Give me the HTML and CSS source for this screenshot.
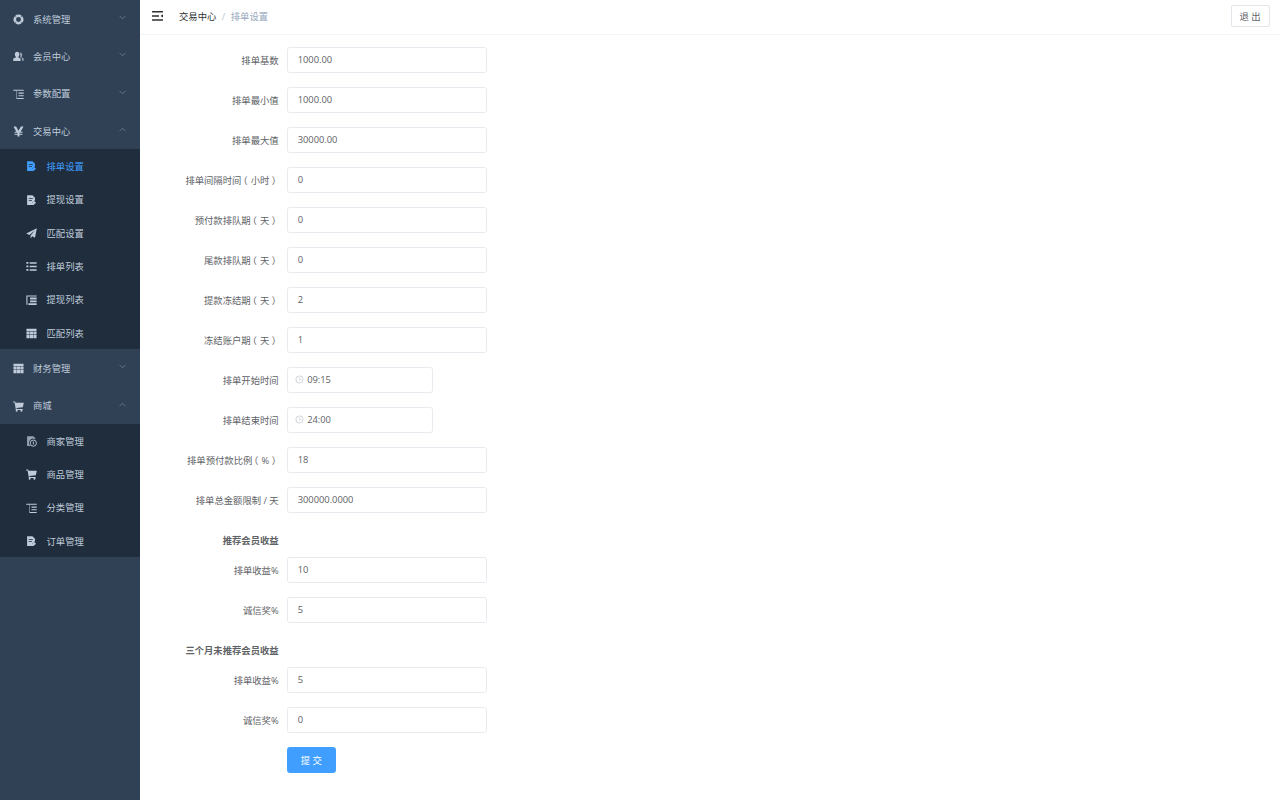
FILE: index.html
```html
<!DOCTYPE html>
<html lang="zh-CN">
<head>
<meta charset="utf-8">
<title>排单设置</title>
<link rel="stylesheet" href="styles.css">
</head>
<body>
<svg class="defs" width="0" height="0" aria-hidden="true">
  <symbol id="i-ring" viewBox="0 0 12 12"><path fill-rule="evenodd" d="M6 .5a5.500 5.500 0 1 1 0 11 5.500 5.500 0 0 1 0-11zM6 3.300a2.700 2.700 0 1 0 0 5.400 2.700 2.700 0 0 0 0-5.400z"/><path fill="#304156" d="M1 2.300l1.300-1.300 1.500 1.800-1 1zM9.700 1l1.300 1.300-1.800 1.500-1-1zM1 9.700l1.300 1.300 1.500-1.800-1-1zM11 9.700L9.700 11 8.200 9.200l1-1z" opacity=".45"/></symbol>
  <symbol id="i-users" viewBox="0 0 12 12"><path d="M4.500 .8c1.600 0 2.500 1.300 2.500 2.900 0 1.100-.4 2-1.100 2.500v.8l2.300 1.300v2.700H.3V8.300L3.100 7v-.8C2.400 5.700 2 4.800 2 3.700 2 2.100 2.900.8 4.500.8z"/><path d="M8 1.600c1.300 0 2.100 1.100 2.100 2.500 0 1-.4 1.700-.9 2.200v.6l2.500 1.300v2.300H9.700V7.800L7.500 6.600c.4-.8.6-1.800.4-2.900-.1-.8-.3-1.500-.6-2z" opacity=".7"/></symbol>
  <symbol id="i-tree" viewBox="0 0 12 12"><path d="M.3 .8h11.400v1.100H.3zM6 3.800h5.700v1.300H6zM6 6.700h5.700v1.300H6zM3.800 9.700h7.900v1.300H3.800z"/><path d="M3.300 1.900h1v8h-1z" opacity=".55"/></symbol>
  <symbol id="i-yen" viewBox="0 0 12 12"><path d="M.5 .6h2.900L6 5.300 8.600 .6h2.900L8.300 6.200h2v1.200H7.100v1h3.200v1.200H7.100v1.900H4.900V9.600H1.700V8.400h3.200v-1H1.700V6.200h2z"/></symbol>
  <symbol id="i-file" viewBox="0 0 12 12"><path d="M1.200 .3H7l2.800 2.800v2.700L7 8.200l-.6 2.800H1.200z"/><path d="M8.500 6.200l2.500 2.300-2.800 2.300-1.700.2.200-2z"/><path fill="#1f2d3d" d="M3 3.500h4.500v.9H3zM3 5.700h3.500v.9H3z"/></symbol>
  <symbol id="i-plane" viewBox="0 0 12 12"><path d="M11.800 .3L9.800 10.500 6.800 9 5 11.500V8.300l5-5.800-6.300 5L.2 6z"/></symbol>
  <symbol id="i-list" viewBox="0 0 12 12"><path d="M.4 1.200h2.200v1.900H.4zM4 1.400h7.600v1.500H4zM.4 5h2.200v1.900H.4zM4 5.200h7.600v1.500H4zM.4 8.800h2.200v1.900H.4zM4 9h7.600v1.500H4z"/></symbol>
  <symbol id="i-tree2" viewBox="0 0 12 12"><path d="M.4 .6h11.200v1H.4zM.4 1.600h1.200v9H.4zM4.400 2.800h7.200v2.200H4.400zM4.400 6h7.200v2H4.400zM2.600 9h9v2H2.600z"/></symbol>
  <symbol id="i-table" viewBox="0 0 12 12"><path d="M.5 .8h11v2.500H.5zM.5 3.800h3.400v3.300H.5zM4.300 3.800h3.400v3.300H4.300zM8.100 3.800h3.400v3.300H8.100zM.5 7.500h3.400v3.700H.5zM4.300 7.500h3.400v3.700H4.300zM8.100 7.500h3.400v3.700H8.100z"/></symbol>
  <symbol id="i-cart" viewBox="0 0 12 12"><path d="M.2 .6h2.200l.4 1.300h9l-1.100 5-6.900.8.200 1h6.500v1H3.200L1.700 1.600H.2z"/><circle cx="4" cy="10.500" r="1.100"/><circle cx="9.200" cy="10.500" r="1.100"/></symbol>
  <symbol id="i-shop" viewBox="0 0 12 12"><path d="M1.200 .3H8l2.200 2.200v1.200a4.200 4.200 0 0 0-4.800 7.300H1.200z" opacity=".75"/><circle cx="8" cy="7.800" r="3.400" fill="none" stroke="currentColor"/><path d="M7.500 6h1v3.200h-1z"/></symbol>
  <symbol id="i-down" viewBox="0 0 8 5"><path d="M.5.500L4 4 7.500.5" fill="none" stroke="currentColor" stroke-width=".7"/></symbol>
  <symbol id="i-up" viewBox="0 0 8 5"><path d="M.5 4.500L4 1l3.500 3.500" fill="none" stroke="currentColor" stroke-width=".7"/></symbol>
</svg>
<div class="app">
  <aside class="sidebar">
    <div class="menu-title"><svg class="ico"><use href="#i-ring"/></svg><span class="menu-text">系统管理</span><svg class="arrow"><use href="#i-down"/></svg></div>
    <div class="menu-title"><svg class="ico"><use href="#i-users"/></svg><span class="menu-text">会员中心</span><svg class="arrow"><use href="#i-down"/></svg></div>
    <div class="menu-title"><svg class="ico"><use href="#i-tree"/></svg><span class="menu-text">参数配置</span><svg class="arrow"><use href="#i-down"/></svg></div>
    <div class="menu-title"><svg class="ico"><use href="#i-yen"/></svg><span class="menu-text">交易中心</span><svg class="arrow"><use href="#i-up"/></svg></div>
    <div class="submenu">
      <div class="menu-item active"><svg class="ico"><use href="#i-file"/></svg><span class="menu-text">排单设置</span></div>
      <div class="menu-item"><svg class="ico"><use href="#i-file"/></svg><span class="menu-text">提现设置</span></div>
      <div class="menu-item"><svg class="ico"><use href="#i-plane"/></svg><span class="menu-text">匹配设置</span></div>
      <div class="menu-item"><svg class="ico"><use href="#i-list"/></svg><span class="menu-text">排单列表</span></div>
      <div class="menu-item"><svg class="ico"><use href="#i-tree2"/></svg><span class="menu-text">提现列表</span></div>
      <div class="menu-item"><svg class="ico"><use href="#i-table"/></svg><span class="menu-text">匹配列表</span></div>
    </div>
    <div class="menu-title"><svg class="ico"><use href="#i-table"/></svg><span class="menu-text">财务管理</span><svg class="arrow"><use href="#i-down"/></svg></div>
    <div class="menu-title"><svg class="ico"><use href="#i-cart"/></svg><span class="menu-text">商城</span><svg class="arrow"><use href="#i-up"/></svg></div>
    <div class="submenu">
      <div class="menu-item"><svg class="ico"><use href="#i-shop"/></svg><span class="menu-text">商家管理</span></div>
      <div class="menu-item"><svg class="ico"><use href="#i-cart"/></svg><span class="menu-text">商品管理</span></div>
      <div class="menu-item"><svg class="ico"><use href="#i-tree"/></svg><span class="menu-text">分类管理</span></div>
      <div class="menu-item"><svg class="ico"><use href="#i-file"/></svg><span class="menu-text">订单管理</span></div>
    </div>
  </aside>
  <div class="main">
    <header class="navbar">
      <svg class="hamburger" viewBox="0 0 11 10"><path d="M0 0h11v1.500H0zM0 4.200h7v1.500H0zM0 8.300h11v1.500H0zM8.500 4.950L11 3.300v3.300z"/></svg>
      <nav class="crumbs"><span class="crumb-link">交易中心</span><span class="crumb-sep">/</span><span class="crumb-current">排单设置</span></nav>
      <button class="logout" type="button">退 出</button>
    </header>
    <form class="form">
      <div class="row"><label class="label">排单基数</label><input class="input" value="1000.00"></div>
      <div class="row"><label class="label">排单最小值</label><input class="input" value="1000.00"></div>
      <div class="row"><label class="label">排单最大值</label><input class="input" value="30000.00"></div>
      <div class="row"><label class="label">排单间隔时间<span class="pl">（</span>小时<span class="pr">）</span></label><input class="input" value="0"></div>
      <div class="row"><label class="label">预付款排队期<span class="pl">（</span>天<span class="pr">）</span></label><input class="input" value="0"></div>
      <div class="row"><label class="label">尾款排队期<span class="pl">（</span>天<span class="pr">）</span></label><input class="input" value="0"></div>
      <div class="row"><label class="label">提款冻结期<span class="pl">（</span>天<span class="pr">）</span></label><input class="input" value="2"></div>
      <div class="row"><label class="label">冻结账户期<span class="pl">（</span>天<span class="pr">）</span></label><input class="input" value="1"></div>
      <div class="row"><label class="label">排单开始时间</label>
        <div class="time"><svg class="clock" viewBox="0 0 10 10"><circle cx="5" cy="5" r="4" fill="none" stroke="currentColor" stroke-width=".8"/><path d="M5 2.500V5.300h2.200" fill="none" stroke="currentColor" stroke-width=".7"/></svg><span>09:15</span></div>
      </div>
      <div class="row"><label class="label">排单结束时间</label>
        <div class="time"><svg class="clock" viewBox="0 0 10 10"><circle cx="5" cy="5" r="4" fill="none" stroke="currentColor" stroke-width=".8"/><path d="M5 2.500V5.300h2.200" fill="none" stroke="currentColor" stroke-width=".7"/></svg><span>24:00</span></div>
      </div>
      <div class="row"><label class="label">排单预付款比例<span class="pl">（</span>%<span class="pr">）</span></label><input class="input" value="18"></div>
      <div class="row"><label class="label">排单总金额限制 / 天</label><input class="input" value="300000.0000"></div>
      <div class="row section"><label class="label strong">推荐会员收益</label></div>
      <div class="row"><label class="label">排单收益%</label><input class="input" value="10"></div>
      <div class="row"><label class="label">诚信奖%</label><input class="input" value="5"></div>
      <div class="row section"><label class="label strong">三个月未推荐会员收益</label></div>
      <div class="row"><label class="label">排单收益%</label><input class="input" value="5"></div>
      <div class="row"><label class="label">诚信奖%</label><input class="input" value="0"></div>
      <div class="row"><span class="label"></span><button class="submit" type="button">提 交</button></div>
    </form>
  </div>
</div>
</body>
</html>
```
FILE: styles.css
```css
* { box-sizing: border-box; }
html, body { margin: 0; height: 100%; overflow: hidden; }
body {
  font-family: "Open Sans", "Noto Sans CJK SC", sans-serif;
  font-size: 9.33px;
  color: #606266;
  background: #fff;
}
.defs { position: absolute; }
.app { display: flex; height: 800px; }
.sidebar { width: 140px; flex: none; background: #304156; color: #bfcbd9; }
.menu-title {
  display: flex;
  align-items: center;
  height: 37.33px;
  padding: 1.6px 14px 0 12.5px;
}
.menu-item {
  display: flex;
  align-items: center;
  height: 33.33px;
  padding: 1.6px 0 0 26px;
}
.submenu { background: #1f2d3d; }
.ico { width: 11px; height: 11px; fill: currentColor; flex: none; margin-right: 9.5px; }
.menu-text { flex: 1; line-height: 1; }
.arrow { width: 7px; height: 5px; color: #8492a3; flex: none; margin-top: -4px; }
.active { color: #409eff; }
.main { flex: 1; min-width: 0; display: flex; flex-direction: column; }
.navbar {
  display: flex;
  align-items: center;
  height: 35px;
  padding: 0 10.5px 2px 11.5px;
  border-bottom: 1px solid #f3f4f6;
}
.hamburger { width: 11px; height: 10px; fill: #303133; flex: none; }
.crumbs { margin-left: 16.5px; flex: 1; display: flex; align-items: center; }
.crumb-link { color: #303133; }
.crumb-sep { color: #c0c4cc; margin: 0 5.5px; }
.crumb-current { color: #97a8be; }
.logout {
  width: 39px;
  height: 21.5px;
  padding: 0;
  font: inherit;
  color: #606266;
  background: #fff;
  border: 1px solid #e3e5ea;
  border-radius: 2px;
}
.form {
  padding: 11.9px 0 0 6.67px;
  display: flex;
  flex-direction: column;
  gap: 13.5px;
}
.row { display: flex; align-items: center; height: 26.5px; }
.section { margin-bottom: -10px; }
.label { width: 140px; padding-right: 8px; text-align: right; flex: none; }
.pl { font-feature-settings: "halt"; margin-left: 1.5px; margin-right: 3.17px; }
.pr { font-feature-settings: "halt"; margin-left: 2.5px; margin-right: 2.17px; }
.strong { font-weight: 700; }
.input {
  width: 200px;
  height: 26.5px;
  padding: 0 10px 1px;
  font: inherit;
  color: #606266;
  background: #fff;
  border: 1px solid #e8eaef;
  border-radius: 2.67px;
  outline: none;
}
.time {
  display: flex;
  align-items: center;
  width: 146.67px;
  height: 26.5px;
  padding: 0 0 1px 7px;
  border: 1px solid #e8eaef;
  border-radius: 2.67px;
}
.clock { width: 9px; height: 9px; color: #c0c4cc; margin-right: 3.5px; flex: none; }
.submit {
  width: 49.33px;
  height: 26.5px;
  padding: 0;
  font: inherit;
  color: #fff;
  background: #409eff;
  border: 1px solid #409eff;
  border-radius: 2.67px;
}
```
